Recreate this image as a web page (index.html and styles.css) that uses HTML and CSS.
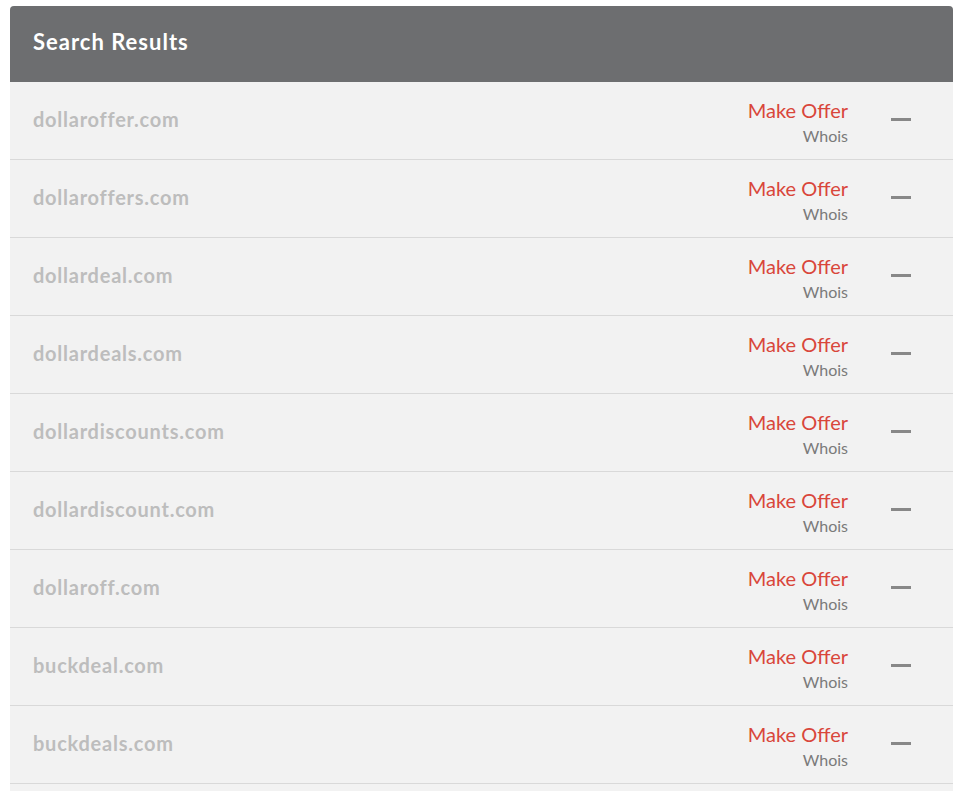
FILE: index.html
```html
<!DOCTYPE html>
<html>
<head>
<meta charset="utf-8">
<link rel="stylesheet" href="styles.css">
</head>
<body>
<div class="panel">
  <div class="panel-head">Search Results</div>
  <ul class="results">
    <li class="row"><span class="domain">dollaroffer.com</span><div class="actions"><a class="offer">Make Offer</a><a class="whois">Whois</a></div><span class="minus"></span></li>
    <li class="row"><span class="domain">dollaroffers.com</span><div class="actions"><a class="offer">Make Offer</a><a class="whois">Whois</a></div><span class="minus"></span></li>
    <li class="row"><span class="domain">dollardeal.com</span><div class="actions"><a class="offer">Make Offer</a><a class="whois">Whois</a></div><span class="minus"></span></li>
    <li class="row"><span class="domain">dollardeals.com</span><div class="actions"><a class="offer">Make Offer</a><a class="whois">Whois</a></div><span class="minus"></span></li>
    <li class="row"><span class="domain">dollardiscounts.com</span><div class="actions"><a class="offer">Make Offer</a><a class="whois">Whois</a></div><span class="minus"></span></li>
    <li class="row"><span class="domain">dollardiscount.com</span><div class="actions"><a class="offer">Make Offer</a><a class="whois">Whois</a></div><span class="minus"></span></li>
    <li class="row"><span class="domain">dollaroff.com</span><div class="actions"><a class="offer">Make Offer</a><a class="whois">Whois</a></div><span class="minus"></span></li>
    <li class="row"><span class="domain">buckdeal.com</span><div class="actions"><a class="offer">Make Offer</a><a class="whois">Whois</a></div><span class="minus"></span></li>
    <li class="row"><span class="domain">buckdeals.com</span><div class="actions"><a class="offer">Make Offer</a><a class="whois">Whois</a></div><span class="minus"></span></li>
  </ul>
</div>
</body>
</html>
```

FILE: styles.css
```css
html, body {
  margin: 0;
  padding: 0;
  background: #ffffff;
  font-family: Lato, "Open Sans", "Liberation Sans", sans-serif;
}
body {
  padding: 6px 11px 0 10px;
  height: 791px;
  box-sizing: border-box;
  overflow: hidden;
}
.panel {
  background: #f2f2f2;
  border-radius: 4px 4px 0 0;
  overflow: hidden;
  height: 100%;
}
.panel-head {
  background: #6d6e70;
  color: #ffffff;
  font-weight: 700;
  font-size: 22px;
  letter-spacing: 1px;
  height: 76px;
  box-sizing: border-box;
  padding: 0 23px 5px;
  display: flex;
  align-items: center;
}
.results {
  list-style: none;
  margin: 0;
  padding: 0;
}
.row {
  height: 78px;
  box-sizing: border-box;
  border-bottom: 1px solid #d9d9d9;
  display: flex;
  align-items: stretch;
  padding: 0 42px 0 23px;
}
.domain {
  flex: 1;
  align-self: center;
  color: #bdbdbd;
  font-weight: 700;
  font-size: 20px;
  letter-spacing: 0.75px;
  padding-bottom: 4px;
}
.actions {
  display: flex;
  flex-direction: column;
  align-items: flex-end;
  margin-right: 43px;
  padding-top: 16px;
}
.offer {
  color: #d9463b;
  font-size: 20px;
  line-height: 24px;
}
.whois {
  color: #7a7a7a;
  font-size: 16px;
  line-height: 24px;
  margin-top: 2px;
}
.minus {
  align-self: center;
  width: 20px;
  height: 3px;
  background: #888888;
  display: block;
  margin-bottom: 2px;
}
```
